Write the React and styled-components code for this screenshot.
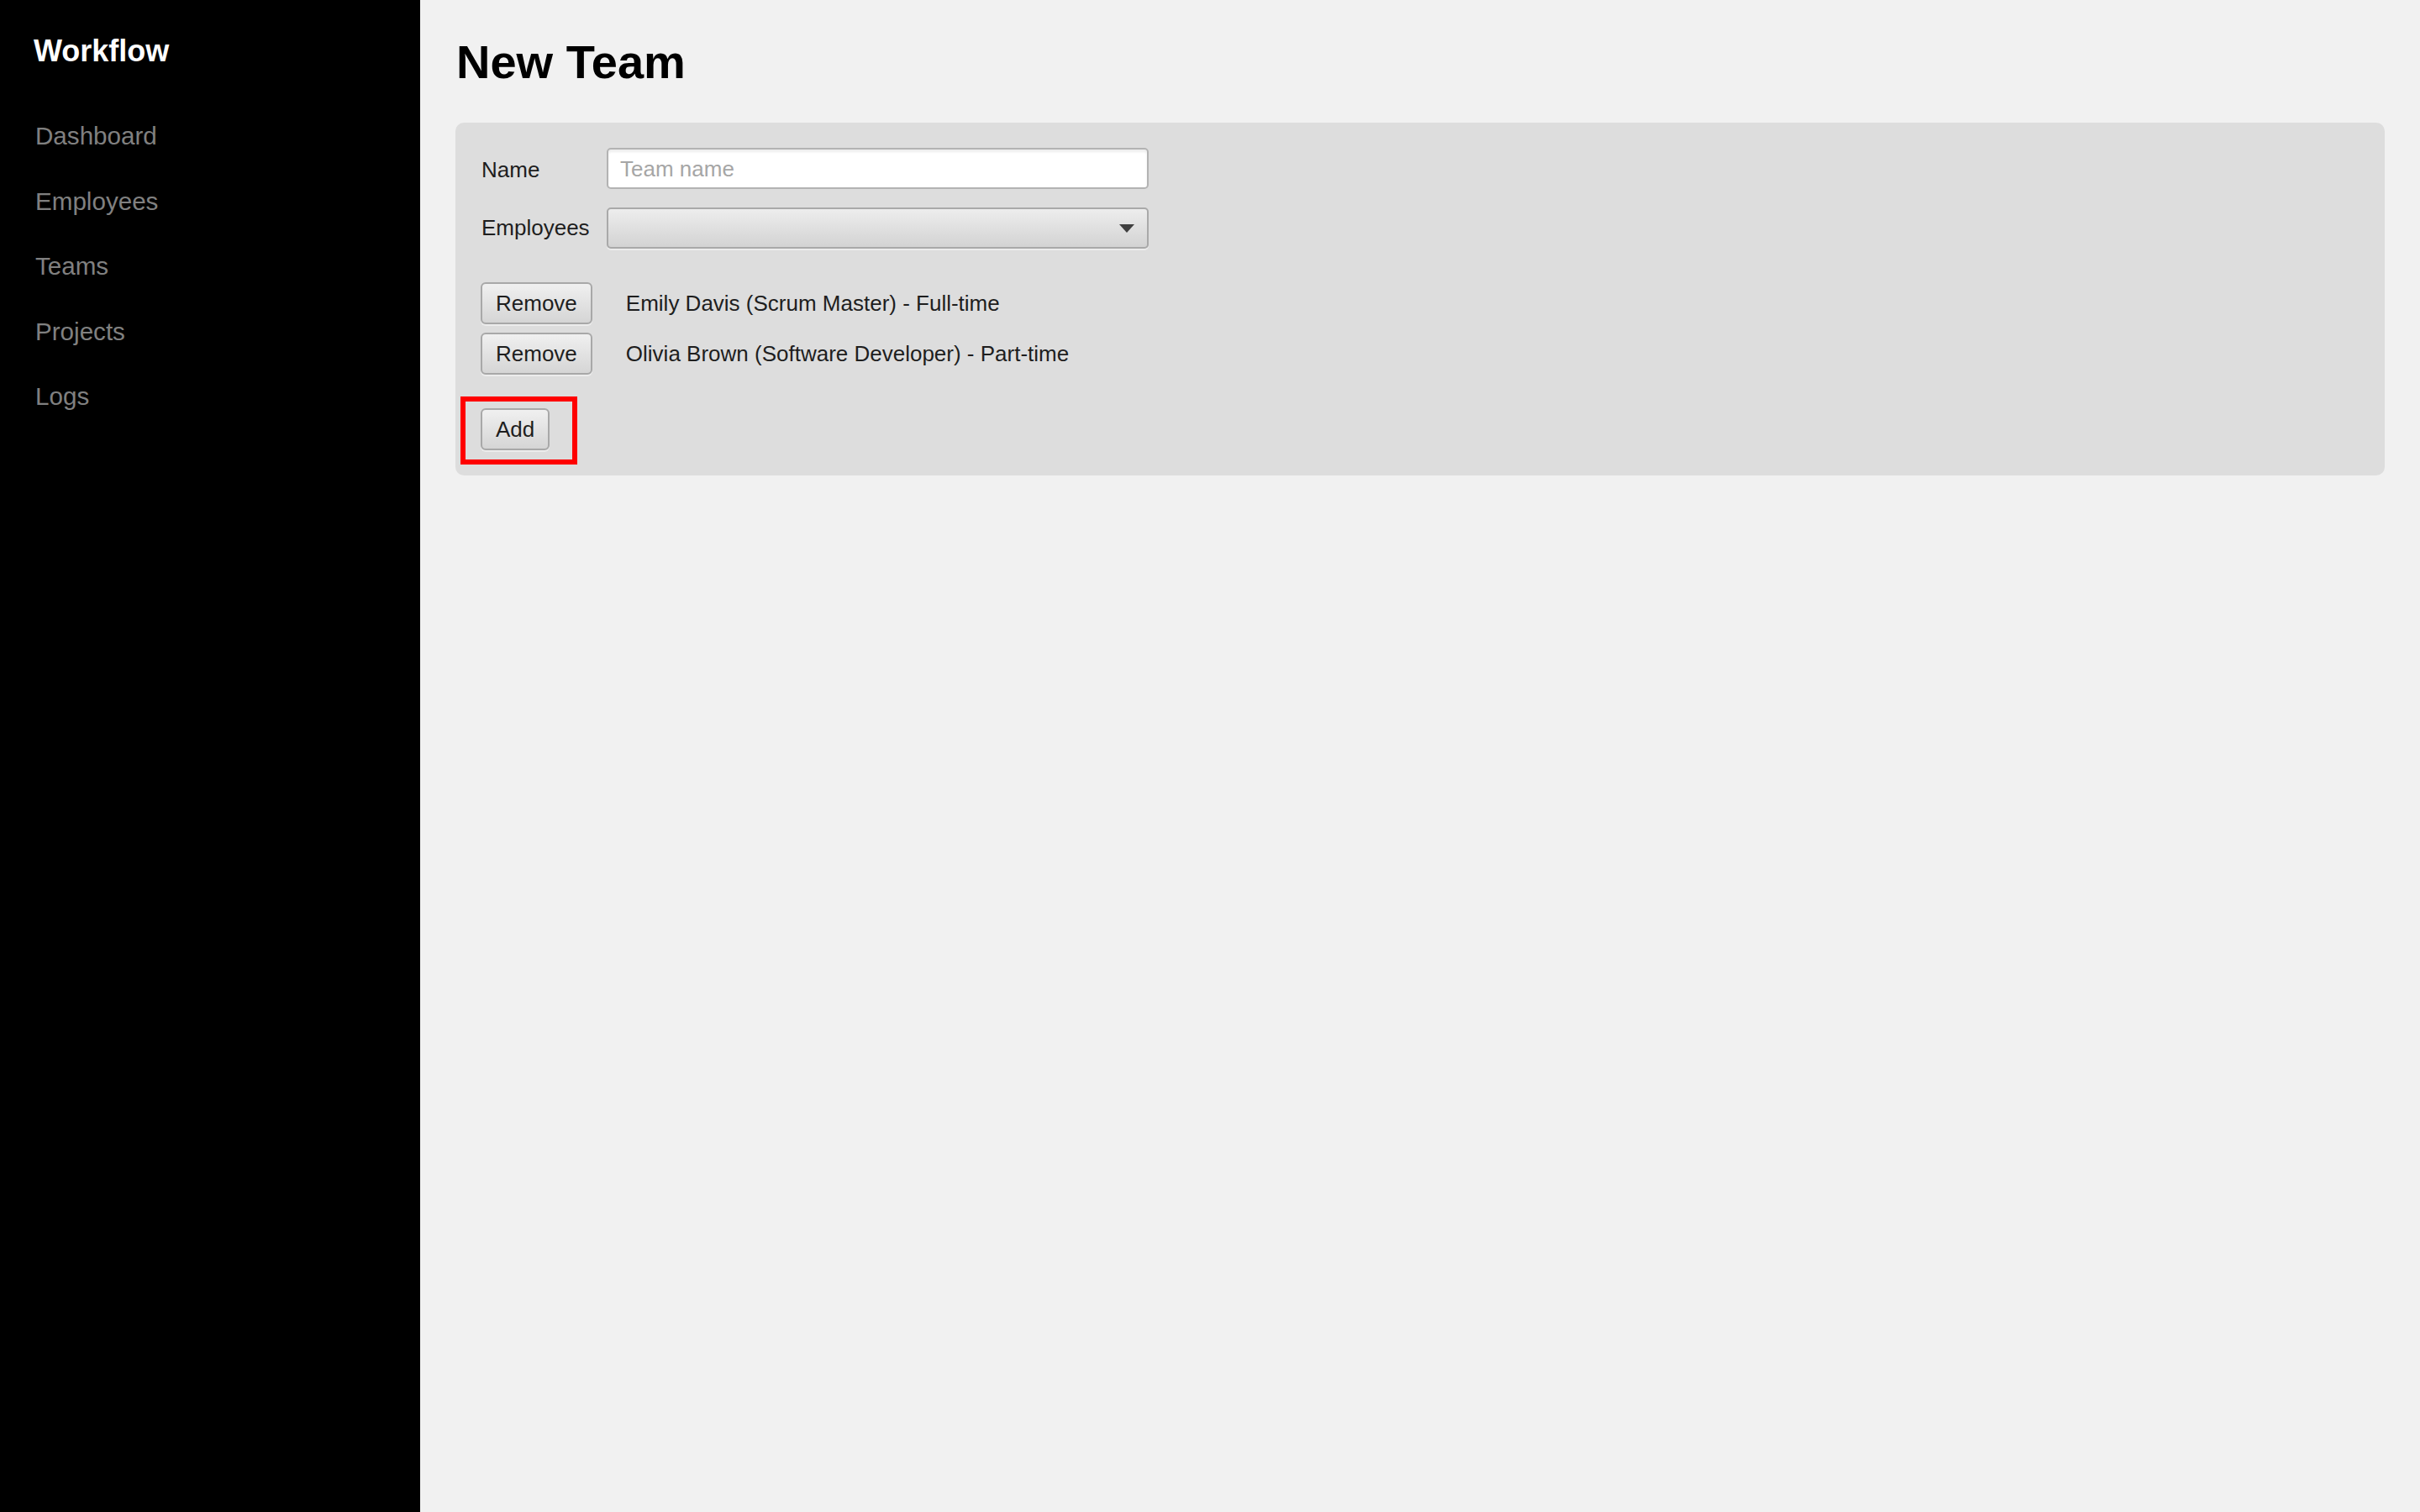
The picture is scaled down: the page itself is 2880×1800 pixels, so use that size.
import React from "react";
import styled, { createGlobalStyle } from "styled-components";

const GlobalStyle = createGlobalStyle`
  html, body {
    margin: 0;
    padding: 0;
    font-family: "Liberation Sans", Arial, sans-serif;
  }
  * {
    box-sizing: border-box;
  }
`;

const Layout = styled.div`
  display: flex;
  min-height: 100vh;
`;

const Sidebar = styled.nav`
  width: 500px;
  flex-shrink: 0;
  background: #000;
  padding: 40px 40px;
`;

const Brand = styled.div`
  color: #fff;
  font-weight: bold;
  font-size: 36px;
  line-height: 42px;
  margin-bottom: 41px;
`;

const NavList = styled.ul`
  list-style: none;
  margin: 0;
  padding: 0 0 0 2px;
`;

const NavItem = styled.li`
  color: #808080;
  font-size: 29.6px;
  line-height: 77.6px;
`;

const Main = styled.main`
  flex: 1;
  background: #f1f1f1;
  padding: 42px;
`;

const Title = styled.h1`
  margin: 0 0 40px 1px;
  font-size: 56px;
  line-height: 64px;
  font-weight: bold;
  color: #000;
`;

const Panel = styled.div`
  background: #dddddd;
  border-radius: 10px;
  padding: 30px;
`;

const FormGrid = styled.div`
  display: grid;
  grid-template-columns: 150px 645px;
  row-gap: 22px;
  align-items: center;
`;

const Label = styled.label`
  font-size: 26px;
  color: #1e1e1e;
  padding-left: 1px;
  padding-top: ${(p) => (p.$nudge ? "3px" : "0")};
`;

const TextInput = styled.input`
  height: 49px;
  width: 100%;
  border: 2px solid #b3b3b3;
  border-radius: 5px;
  padding: 2px 14px 0;
  font-family: inherit;
  font-size: 26px;
  color: #222;
  background: #fff;
  box-shadow: inset 0 3px 3px rgba(0, 0, 0, 0.07);
  outline: none;

  &::placeholder {
    color: #a6a6a6;
  }
`;

const SelectWrap = styled.div`
  position: relative;
  height: 49px;
`;

const Select = styled.select`
  appearance: none;
  width: 100%;
  height: 49px;
  border: 2px solid #a9a9a9;
  border-radius: 5px;
  background: linear-gradient(#ededed, #d3d3d3);
  box-shadow: 0 2px 0 #ececec;
  font-family: inherit;
  font-size: 26px;
  outline: none;
`;

const Arrow = styled.svg`
  position: absolute;
  right: 17px;
  top: 20px;
  pointer-events: none;
`;

const MemberList = styled.div`
  margin-top: 40px;
  display: flex;
  flex-direction: column;
  gap: 10px;
`;

const MemberRow = styled.div`
  display: flex;
  align-items: center;
  gap: 40px;
`;

const MemberText = styled.span`
  font-size: 26px;
  color: #1e1e1e;
`;

const Button = styled.button`
  height: 50px;
  padding: 0 16px;
  border: 2px solid #a8a8a8;
  border-radius: 6px;
  background: linear-gradient(#f0f0f0, #d5d5d5);
  box-shadow: 0 2px 0 #ececec;
  font-family: inherit;
  font-size: 26px;
  color: #1e1e1e;
  cursor: pointer;
`;

const AddArea = styled.div`
  margin-top: 40px;
  display: flex;
`;

const Highlighted = styled.span`
  position: relative;
  display: inline-block;
`;

const HighlightBox = styled.span`
  position: absolute;
  left: -24px;
  top: -14px;
  width: 139px;
  height: 81px;
  border: 6px solid #ff0000;
  pointer-events: none;
`;

const navItems = ["Dashboard", "Employees", "Teams", "Projects", "Logs"];

const members = [
  "Emily Davis (Scrum Master) - Full-time",
  "Olivia Brown (Software Developer) - Part-time",
];

export default function App() {
  return (
    <>
      <GlobalStyle />
      <Layout>
        <Sidebar>
          <Brand>Workflow</Brand>
          <NavList>
            {navItems.map((item) => (
              <NavItem key={item}>{item}</NavItem>
            ))}
          </NavList>
        </Sidebar>
        <Main>
          <Title>New Team</Title>
          <Panel>
            <FormGrid>
              <Label $nudge>Name</Label>
              <TextInput placeholder="Team name" />
              <Label>Employees</Label>
              <SelectWrap>
                <Select defaultValue="">
                  <option value=""></option>
                </Select>
                <Arrow width="18" height="10" viewBox="0 0 18 10">
                  <path d="M0 0 L18 0 L9 10 Z" fill="#404040" />
                </Arrow>
              </SelectWrap>
            </FormGrid>

            <MemberList>
              {members.map((m) => (
                <MemberRow key={m}>
                  <Button>Remove</Button>
                  <MemberText>{m}</MemberText>
                </MemberRow>
              ))}
            </MemberList>

            <AddArea>
              <Highlighted>
                <Button>Add</Button>
                <HighlightBox />
              </Highlighted>
            </AddArea>
          </Panel>
        </Main>
      </Layout>
    </>
  );
}
